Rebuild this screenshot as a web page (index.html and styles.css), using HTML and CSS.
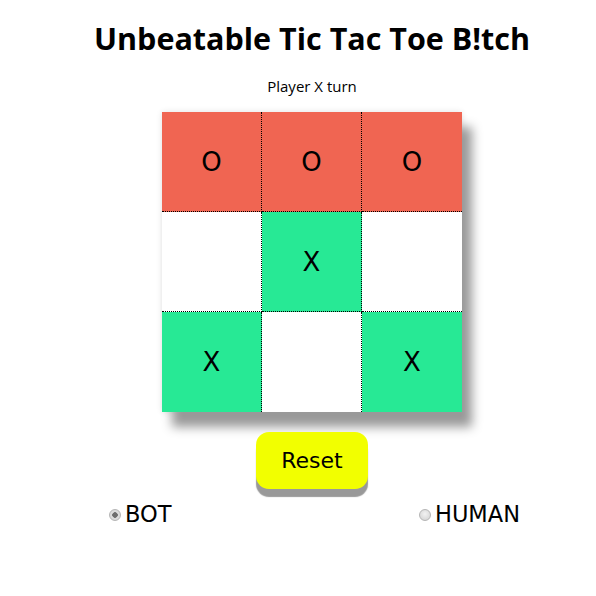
FILE: index.html
```html
<!DOCTYPE html>
<html>
<head>
<meta charset="utf-8">
<link rel="stylesheet" href="styles.css">
</head>
<body>
<main class="app">
  <h1 class="title">Unbeatable Tic Tac Toe B!tch</h1>
  <p class="status">Player X turn</p>
  <div class="board">
    <div class="cell o br bb">O</div>
    <div class="cell o br bb">O</div>
    <div class="cell o bb">O</div>
    <div class="cell br bb"></div>
    <div class="cell x br bb">X</div>
    <div class="cell bb"></div>
    <div class="cell x br">X</div>
    <div class="cell br"></div>
    <div class="cell x">X</div>
  </div>
  <button class="reset">Reset</button>
  <div class="modes">
    <label class="mode"><input class="radio" type="radio" name="mode" checked disabled>BOT</label>
    <label class="mode"><input class="radio" type="radio" name="mode" disabled>HUMAN</label>
  </div>
</main>
</body>
</html>
```
FILE: styles.css
```css
html, body { margin: 0; padding: 0; background: #fff; }
body { padding-left: 28px; }
.app {
  display: flex;
  flex-direction: column;
  align-items: center;
}
.title {
  font-family: "Open Sans", "DejaVu Sans", sans-serif;
  font-weight: 700;
  font-size: 30.5px;
  margin: 18px 0 0;
  line-height: 40px;
  color: #000;
}
.status {
  font-family: "Open Sans", "DejaVu Sans", sans-serif;
  font-size: 15px;
  margin: 18px 0 0;
  line-height: 20px;
}
.board {
  margin-top: 16px;
  display: grid;
  grid-template-columns: repeat(3, 100px);
  grid-template-rows: repeat(3, 100px);
  box-shadow: 10px 15px 10px #999, 0 0 6px rgba(0,0,0,0.12);
}
.cell {
  box-sizing: border-box;
  background: #fff;
  display: flex;
  align-items: center;
  justify-content: center;
  font-family: "DejaVu Sans", sans-serif;
  font-size: 26px;
  color: #000;
}
.cell.o { background: #f06552; }
.cell.x { background: #27e995; }
.br { border-right: 1px dotted #000; }
.bb { border-bottom: 1px dotted #000; }
.reset {
  margin-top: 20px;
  width: 112px;
  height: 57px;
  border: none;
  border-radius: 13px;
  background: #f2ff00;
  box-shadow: 0 8px 1px #999;
  font-family: "DejaVu Sans", sans-serif;
  font-size: 22px;
  color: #000;
  padding: 0;
}
.modes {
  margin-top: 12px;
  width: 416px;
  display: flex;
  justify-content: space-between;
}
.mode {
  font-family: "DejaVu Sans", sans-serif;
  font-size: 22.5px;
  display: flex;
  align-items: center;
}
.radio {
  appearance: none;
  -webkit-appearance: none;
  margin: 2px 4px 0 5px;
  width: 12px;
  height: 12px;
  border-radius: 50%;
  border: 1px solid #b5b5b5;
  background: radial-gradient(circle at 50% 40%, #f2f2f2, #d0d0d0);
  box-sizing: border-box;
}
.radio:checked {
  background: radial-gradient(circle, #6e6e6e 0 2.5px, #dcdcdc 3px);
}
```
